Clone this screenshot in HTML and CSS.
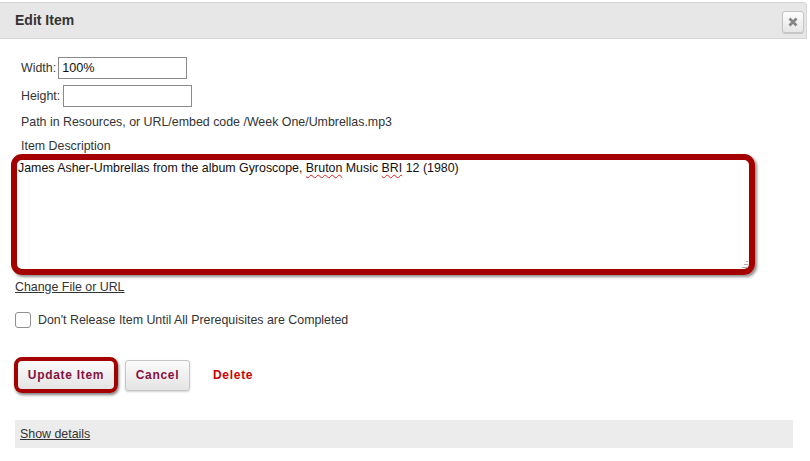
FILE: index.html
```html
<!DOCTYPE html>
<html>
<head>
<meta charset="utf-8">
<link rel="stylesheet" href="styles.css">
</head>
<body>
<div class="dialog">
  <div class="header">
    <div class="title">Edit Item</div>
    <button class="close" aria-label="close">
      <svg width="10" height="10" viewBox="0 0 10 10"><path d="M1.5 1.5 L8.5 8.5 M8.5 1.5 L1.5 8.5" stroke="#858585" stroke-width="2.6" stroke-linecap="butt"/></svg>
    </button>
  </div>
  <div class="form">
    <div class="field row-width">Width: <span class="input">100%</span></div>
    <div class="field row-height">Height: <span class="input"></span></div>
    <div class="field line path">Path in Resources, or URL/embed code /Week One/Umbrellas.mp3</div>
    <div class="field line desc-label">Item Description</div>
    <div class="textarea">James Asher-Umbrellas from the album Gyroscope, <span class="sp">Bruton</span> Music <span class="sp">BRI</span> 12 (1980)<svg class="grip" width="6" height="7" viewBox="0 0 6 7"><rect x="4" y="0" width="2" height="1" fill="#aaa"/><rect x="2" y="3" width="2" height="1" fill="#aaa"/><rect x="4" y="3" width="2" height="1" fill="#aaa"/><rect x="0" y="6" width="2" height="1" fill="#aaa"/><rect x="2" y="6" width="2" height="1" fill="#aaa"/><rect x="4" y="6" width="2" height="1" fill="#aaa"/></svg></div>
    <a class="link change" href="#">Change File or URL</a>
    <label class="check"><span class="box"></span>Don't Release Item Until All Prerequisites are Completed</label>
    <div class="actions">
      <button class="btn highlight">Update Item</button>
      <button class="btn">Cancel</button>
      <span class="delete">Delete</span>
    </div>
    <div class="details"><a class="link" href="#">Show details</a></div>
  </div>
</div>
</body>
</html>
```
FILE: styles.css
```css
* { box-sizing: border-box; }
html, body { margin: 0; padding: 0; background: #fff; }
body {
  font-family: Arial, "Liberation Sans", sans-serif;
  font-size: 12.4px;
  color: #333;
  width: 810px;
  height: 461px;
  overflow: hidden;
}
.header {
  margin: 2px 3px 0 0;
  height: 37px;
  background: #e7e7e7;
  border: 1px solid #d6d6d6;
  border-left: none;
  border-radius: 0 4px 0 0;
  display: flex;
  align-items: center;
  justify-content: space-between;
  padding: 0 2px 0 15px;
}
.title {
  font-size: 14px;
  font-weight: bold;
  color: #333;
  padding-bottom: 2px;
}
.close {
  width: 22px;
  height: 22px;
  padding: 0;
  margin-top: 2px;
  border: 1px solid #c4c4c4;
  border-radius: 3px;
  background: linear-gradient(#fdfdfd, #e6e6e6);
  box-shadow: 0 1px 1px rgba(0,0,0,0.15);
  display: flex;
  align-items: center;
  justify-content: center;
}
.form {
  padding: 0 17px 0 15px;
}
.field { padding-left: 6px; line-height: 16px; }
.row-width { margin-top: 18px; display: flex; align-items: center; height: 22px; }
.row-height { margin-top: 6px; display: flex; align-items: center; height: 22px; }
.row-width .input { margin-left: 2px; }
.row-height .input { margin-left: 3px; }
.input {
  display: inline-block;
  width: 129px;
  height: 22px;
  border: 1px solid #8a8a8a;
  padding: 0 3px;
  line-height: 20px;
  color: #111;
  font-size: 12.6px;
}
.path { margin-top: 7px; }
.desc-label { margin-top: 8px; }
.textarea {
  position: relative;
  margin: 0 0 0 -4px;
  width: 744px;
  height: 121px;
  border: 6px solid #a40000;
  border-radius: 11px;
  box-shadow: 2px 2px 3px rgba(0,0,0,0.45);
  padding: 0 0 0 1px;
  line-height: 16px;
  color: #111;
  font-size: 12.4px;
}
.sp {
  text-decoration: underline wavy #e02020;
  text-decoration-thickness: 1px;
  text-underline-offset: 2px;
}
.grip { position: absolute; right: 1px; bottom: 1px; }
.link {
  color: #333;
  text-decoration: underline;
}
.change {
  display: block;
  margin-top: 4px;
  line-height: 16px;
  width: max-content;
}
.check {
  margin-top: 17px;
  display: flex;
  align-items: center;
  height: 16px;
}
.box {
  width: 16px;
  height: 16px;
  border: 1px solid #8f8f8f;
  border-radius: 3px;
  background: #fff;
  margin-right: 7px;
}
.actions {
  margin-top: 29px;
  margin-left: -1px;
  display: flex;
  align-items: center;
}
.btn {
  font-family: Arial, "Liberation Sans", sans-serif;
  font-size: 12px;
  font-weight: bold;
  letter-spacing: 0.7px;
  color: #86113e;
  height: 31px;
  padding: 0 10px;
  border: 1px solid #c6c6c6;
  border-radius: 3px;
  background: linear-gradient(#fbfbfb, #e4e4e4);
  box-shadow: 0 1px 2px rgba(0,0,0,0.18);
  margin-right: 7px;
}
.btn.highlight {
  height: 36px;
  width: 104px;
  border: 4px solid #a40000;
  border-radius: 8px;
  box-shadow: 1px 2px 3px rgba(0,0,0,0.5);
  padding: 0;
}
.btn:nth-child(2) { width: 65px; padding: 0; }
.delete {
  margin-left: 16px;
  font-size: 12px;
  font-weight: bold;
  letter-spacing: 0.7px;
  color: #d00000;
}
.details {
  margin-top: 27px;
  height: 28px;
  background: #ececec;
  padding-left: 5px;
  display: flex;
  align-items: center;
}
```
